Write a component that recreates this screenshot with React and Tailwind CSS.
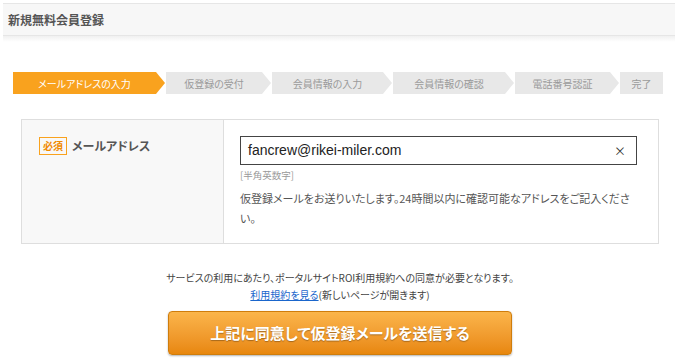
import React from 'react';

const steps = [
  { label: 'メールアドレスの入力', w: 'w-[143px]', active: true },
  { label: '仮登録の受付', w: 'w-[96px]' },
  { label: '会員情報の入力', w: 'w-[111px]' },
  { label: '会員情報の確認', w: 'w-[112px]' },
  { label: '電話番号認証', w: 'w-[95px]' },
];

function Step({ label, w, active }) {
  const fill = active ? '#f9a21e' : '#e8e8e8';
  return (
    <div className="flex items-stretch mr-[1px]">
      <div
        className={`${w} h-[22px] flex items-center justify-center text-[10px] ${
          active ? 'bg-[#f9a21e] text-white' : 'bg-[#e8e8e8] text-[#9a9a9a]'
        }`}
      >
        {label}
      </div>
      <svg width="9" height="22" viewBox="0 0 9 22" className="block">
        <polygon points="0,0 9,11 0,22" fill={fill} />
      </svg>
    </div>
  );
}

export default function App() {
  return (
    <div
      className="w-[680px] h-[361px] overflow-hidden bg-white text-[#444] [font-feature-settings:'palt']"
      style={{ fontFamily: '"Noto Sans CJK JP", "Liberation Sans", sans-serif' }}
    >
      {/* page title */}
      <div className="pt-[3px] pl-[3px] pr-[5px]">
        <div className="h-[33px] bg-[#f7f7f7] border-t border-b border-[#e6e6e6] flex items-center pl-[5px]">
          <h1 className="text-[12px] font-bold text-[#555]">新規無料会員登録</h1>
        </div>
        <div className="h-[6px] bg-gradient-to-b from-[#f0f0f0] to-white" />
      </div>

      {/* steps */}
      <div className="flex pl-[13px] mt-[30px]">
        {steps.map((s) => (
          <Step key={s.label} {...s} />
        ))}
        <div className="w-[43px] h-[22px] bg-[#e8e8e8] text-[#9a9a9a] text-[10px] flex items-center justify-center">
          完了
        </div>
      </div>

      {/* form table */}
      <div className="ml-[21px] mr-[21px] mt-[25px] border border-[#dedede] flex h-[125px]">
        <div className="w-[202px] shrink-0 bg-[#f8f8f8] border-r border-[#dedede] pl-[17px] pt-[17px]">
          <div className="flex items-center gap-[5px]">
            <span className="border border-[#f9a21e] text-[#f08a00] text-[10px] font-bold leading-none px-[3px] py-[3px]">
              必須
            </span>
            <span className="text-[12px] font-bold text-[#555]">メールアドレス</span>
          </div>
        </div>
        <div className="flex-1 min-w-0 pl-[16px] pr-[21px] pt-[16px]">
          <div className="h-[29px] border border-[#444] flex items-center pl-[7px] pr-[10px]">
            <span className="flex-1 text-[14px] text-[#222]" style={{ fontFamily: '"Liberation Sans", sans-serif' }}>
              fancrew@rikei-miler.com
            </span>
            <span className="text-[12px] text-[#333]">×</span>
          </div>
          <p className="text-[9.5px] text-[#999] mt-[3px]">[半角英数字]</p>
          <p className="text-[11px] leading-[20px] text-[#555] mt-[6px]">
            <span className="block whitespace-nowrap">
              仮登録メールをお送りいたします。24時間以内に確認可能なアドレスをご記入くださ
            </span>
            <span className="block">い。</span>
          </p>
        </div>
      </div>

      {/* agreement */}
      <div className="text-center mt-[25px]">
        <p className="text-[10px] text-[#444] leading-[17px]">
          サービスの利用にあたり、ポータルサイトROI利用規約への同意が必要となります。
        </p>
        <p className="text-[10px] text-[#444] leading-[17px]">
          <a className="text-[#1a66cc] underline">利用規約を見る</a>(新しいページが開きます)
        </p>
      </div>

      <div className="flex justify-center mt-[8px]">
        <button
          className="w-[344px] h-[44px] rounded-[4px] border border-[#cf7d0c] bg-gradient-to-b from-[#fbb54a] to-[#e8870c] text-white text-[15px] font-bold shadow-[0_1px_2px_rgba(0,0,0,0.3)]"
          style={{ textShadow: '0 1px 1px rgba(0,0,0,0.3)' }}
        >
          上記に同意して仮登録メールを送信する
        </button>
      </div>
    </div>
  );
}
